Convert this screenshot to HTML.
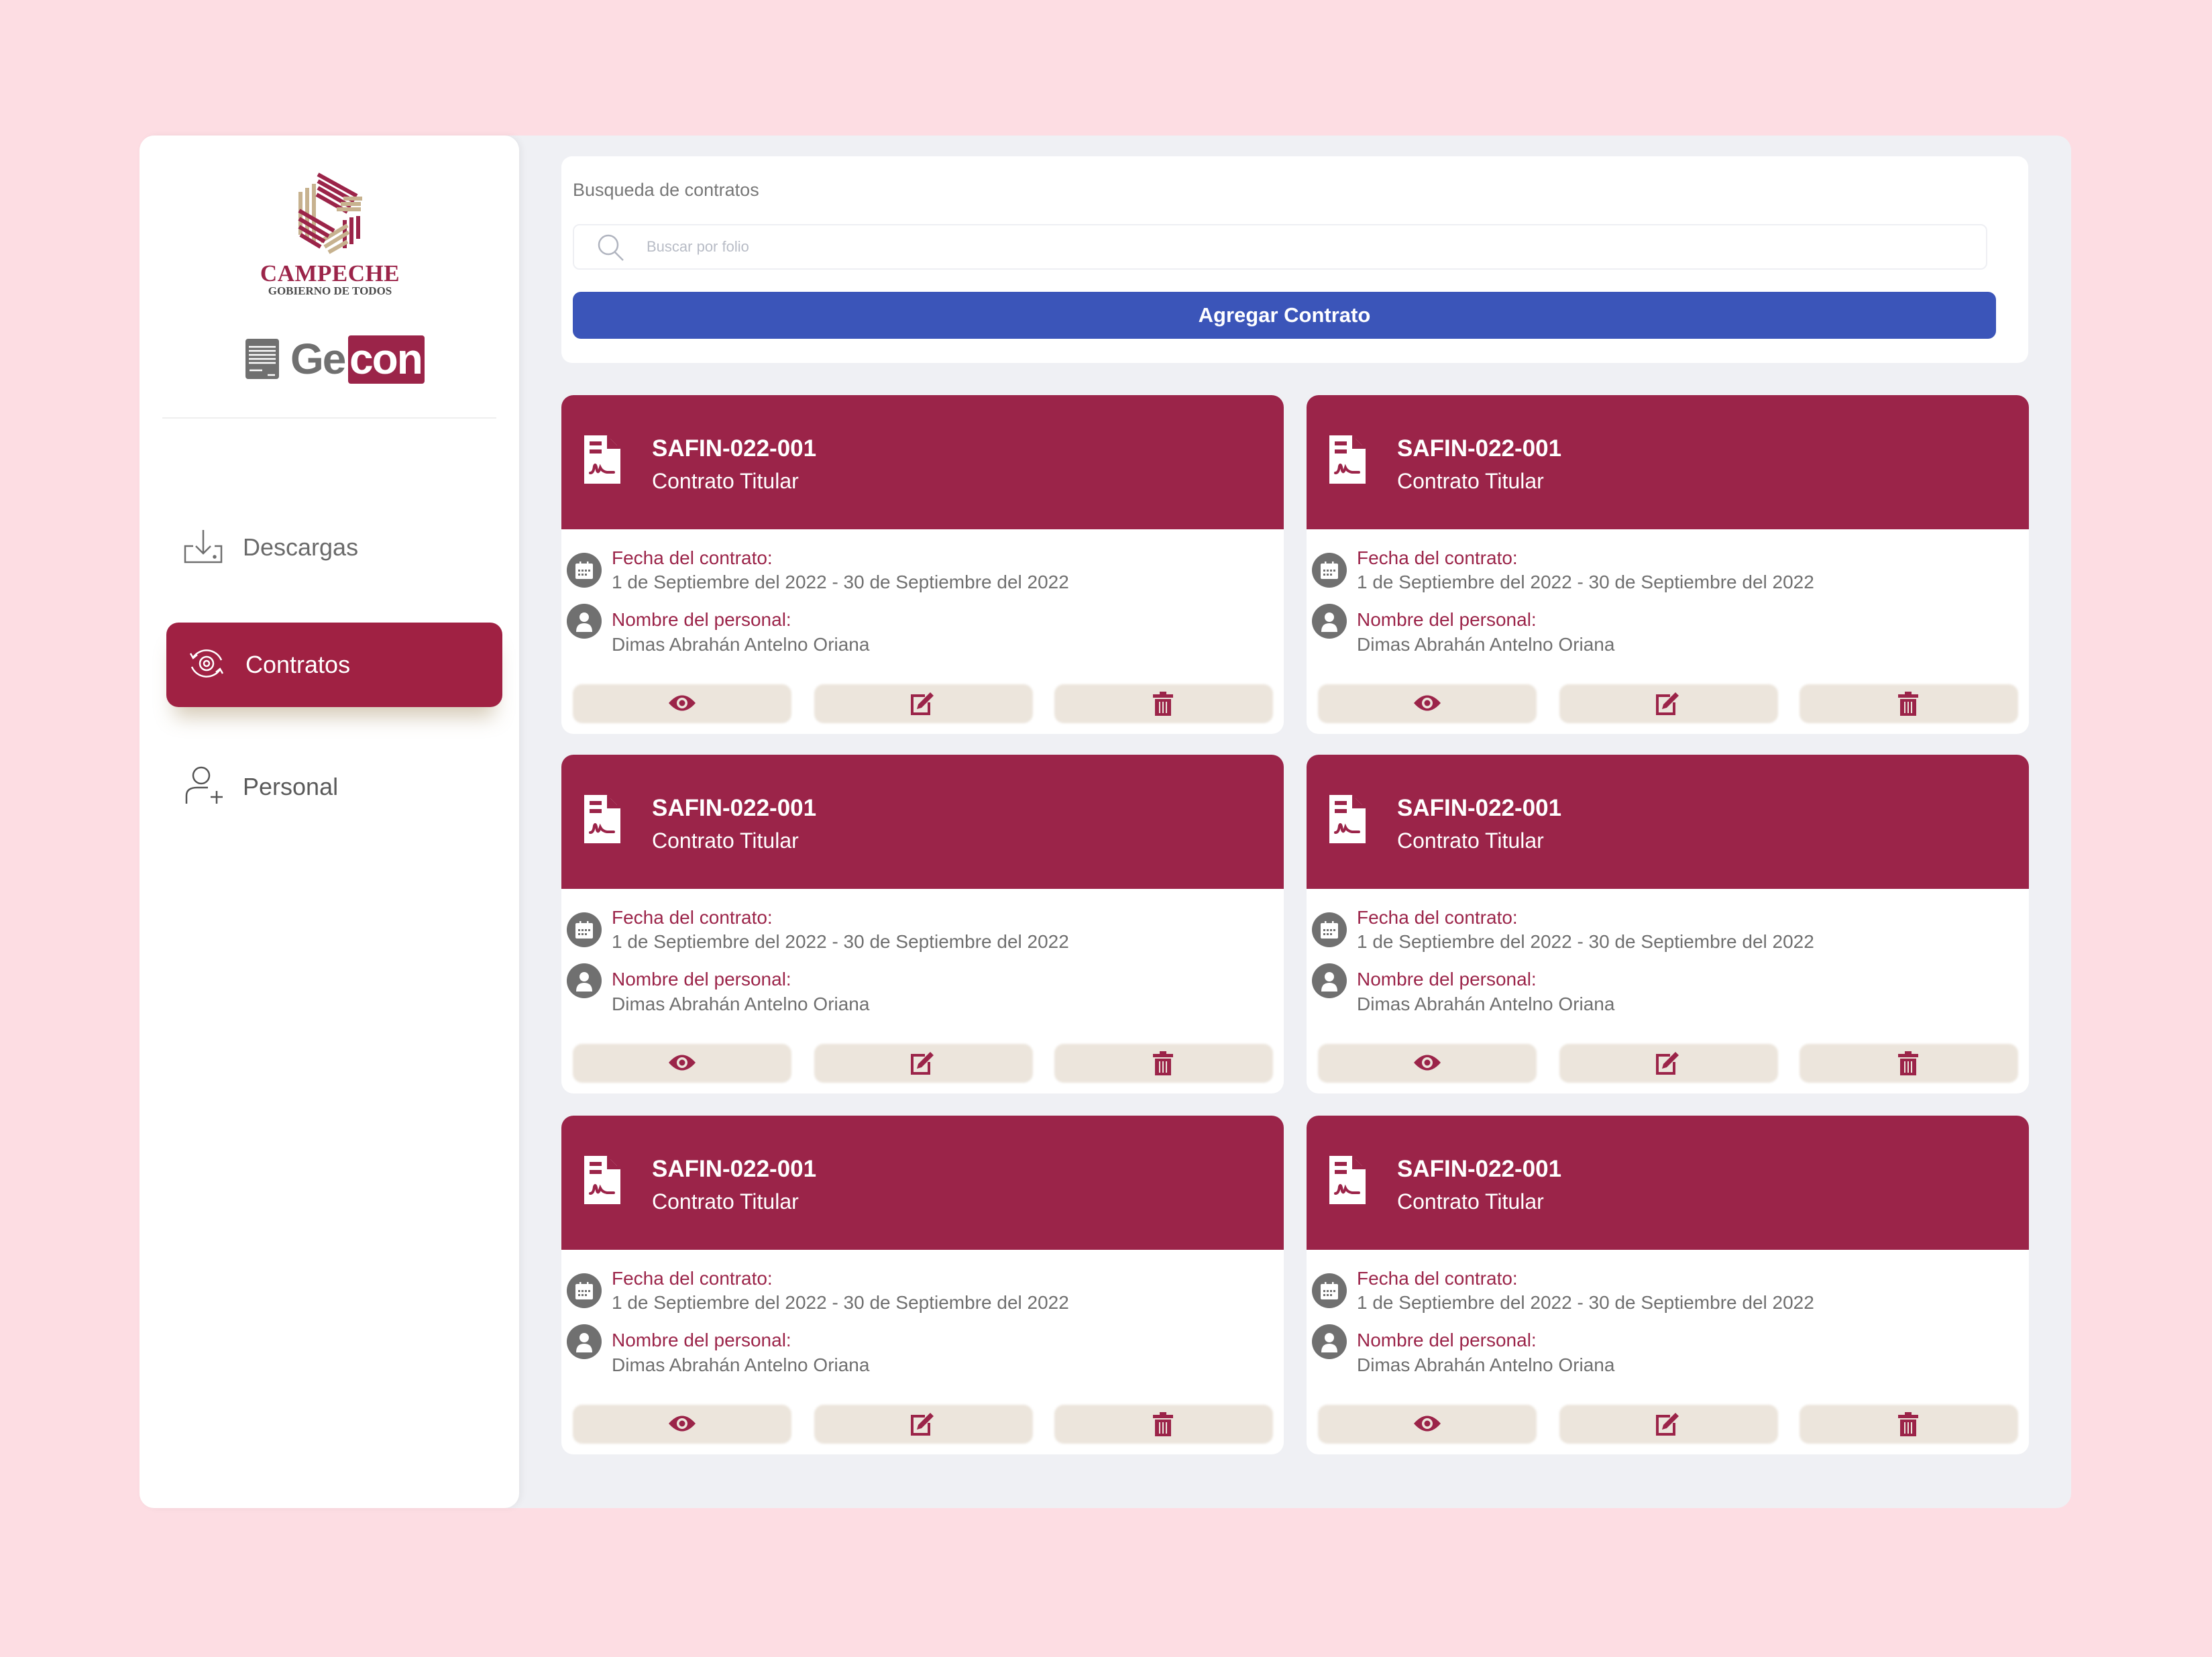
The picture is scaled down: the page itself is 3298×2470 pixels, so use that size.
<!DOCTYPE html>
<html><head><meta charset="utf-8"><style>
*{box-sizing:border-box;margin:0;padding:0}
body{width:3298px;height:2470px;background:#fddde3;font-family:"Liberation Sans",sans-serif;position:relative;overflow:hidden}
.abs{position:absolute}
.frame{left:208px;top:202px;width:2880px;height:2046px;background:#eff0f4;border-radius:22px;}
.side{left:208px;top:202px;width:566px;height:2046px;background:#fff;border-radius:22px;box-shadow:4px 0 10px rgba(0,0,0,.05)}
.card{position:absolute;width:1077px;height:505px;background:#fff;border-radius:18px;overflow:hidden}
.hd{position:absolute;left:0;top:0;width:100%;height:200px;background:#9b2449}
.t1{position:absolute;left:135px;top:60px;color:#fff;font-weight:bold;font-size:35px}
.t2{position:absolute;left:135px;top:110px;color:#fff;font-size:32px}
.circ{position:absolute;left:8px;width:52px;height:52px;border-radius:50%;background:#707070}
.lb{position:absolute;left:75px;color:#9b2449;font-size:28px}
.vl{position:absolute;left:75px;color:#6f6f6f;font-size:28px}
.btn{position:absolute;top:431px;width:326px;height:58px;background:#ece5dc;border-radius:14px;filter:blur(1.5px)}
.ic{position:absolute;top:442px}
</style></head><body>
<div class="abs frame"></div>
<div class="abs side"></div>

<svg class="abs" style="left:428px;top:250px" width="128" height="136" viewBox="0 0 128 136">
<g stroke-width="6" fill="none">
<path d="M20 36 L20 100 M30 30 L30 104 M40 24 L40 110" stroke="#c7b28f"/>
<path d="M46 20 L100 50 M46 30 L95 58 M44 40 L90 66 M46 10 L104 42" stroke="#9b2449"/>
<path d="M74 62 L110 62 M80 54 L110 54 M84 46 L112 46" stroke="#c7b28f"/>
<path d="M86 78 L86 120 M96 74 L96 114 M106 72 L106 106" stroke="#9b2449"/>
<path d="M50 110 L90 86 M56 118 L92 96 M62 126 L90 110" stroke="#c7b28f"/>
<path d="M18 64 L70 94 M18 76 L62 102 M18 88 L56 110 M20 100 L50 118" stroke="#9b2449"/>
</g></svg>
<div class="abs" style="left:372px;top:388px;width:240px;text-align:center;font-family:'Liberation Serif',serif;font-weight:bold;color:#9b2449;font-size:35px;letter-spacing:.5px">CAMPECHE</div>
<div class="abs" style="left:372px;top:424px;width:240px;text-align:center;font-family:'Liberation Serif',serif;font-weight:bold;color:#4a4a4a;font-size:17px">GOBIERNO DE TODOS</div>

<svg class="abs" style="left:366px;top:505px" width="50" height="60" viewBox="0 0 50 60"><rect width="50" height="60" rx="4" fill="#707070"/><g stroke="#fff" stroke-width="2.5"><path d="M5 12H45M5 18H45M5 24H45M5 30H45M5 36H45M6 47H25M33 54H44"/></g></svg>
<div class="abs" style="left:433px;top:498px;font-size:64px;font-weight:bold;color:#707070;letter-spacing:-2px">Ge</div>
<div class="abs" style="left:519px;top:500px;width:114px;height:72px;background:#9b2449;border-radius:4px"></div>
<div class="abs" style="left:521px;top:498px;font-size:64px;font-weight:bold;color:#fff;letter-spacing:-2px">con</div>
<div class="abs" style="left:242px;top:622px;width:498px;height:2px;background:#eeeeee"></div>

<svg class="abs" style="left:274px;top:788px" width="58" height="54" viewBox="0 0 58 54" fill="none" stroke="#6f6f6f" stroke-width="2.5"><path d="M29 2V36M18 26L29 37L40 26M14 26H2V50H56V26H46"/><circle cx="46" cy="42" r="1.5" fill="#6f6f6f"/></svg>
<div class="abs" style="left:362px;top:795px;font-size:36px;color:#6a6a6a">Descargas</div>

<div class="abs" style="left:248px;top:928px;width:501px;height:126px;background:#a02143;border-radius:18px;box-shadow:0 26px 30px -12px rgba(160,135,90,.45)"></div>
<svg class="abs" style="left:280px;top:962px" width="56" height="54" viewBox="0 0 56 54" fill="none" stroke="#fff" stroke-width="2.5"><path d="M8 18A24 24 0 0 1 50 22M48 36A24 24 0 0 1 6 32M4 12L8 19L14 14M52 42L48 35L42 40"/><circle cx="28" cy="27" r="10"/><circle cx="28" cy="27" r="4"/></svg>
<div class="abs" style="left:366px;top:970px;font-size:36px;color:#fff">Contratos</div>

<svg class="abs" style="left:274px;top:1142px" width="60" height="58" viewBox="0 0 60 58" fill="none" stroke="#555" stroke-width="2.5"><circle cx="26" cy="14" r="12"/><path d="M4 56V44Q4 32 20 32H36M40 46H58M49 37V56"/></svg>
<div class="abs" style="left:362px;top:1152px;font-size:36px;color:#5a5a5a">Personal</div>

<div class="abs" style="left:837px;top:233px;width:2187px;height:308px;background:#fff;border-radius:16px"></div>
<div class="abs" style="left:854px;top:268px;font-size:27px;color:#777">Busqueda de contratos</div>
<div class="abs" style="left:854px;top:334px;width:2109px;height:68px;border:2px solid #eeeff3;border-radius:10px"></div>
<svg class="abs" style="left:890px;top:348px" width="44" height="42" viewBox="0 0 44 42" fill="none" stroke="#b0b4bf" stroke-width="2.5"><circle cx="17" cy="17" r="14"/><path d="M27 28L39 40"/></svg>
<div class="abs" style="left:964px;top:355px;font-size:22px;color:#b8bcc6">Buscar por folio</div>
<div class="abs" style="left:854px;top:435px;width:2122px;height:70px;background:#3b55b9;border-radius:12px;color:#fff;font-size:31px;font-weight:bold;text-align:center;line-height:70px">Agregar Contrato</div>

<div id="cards"></div>
<script>
var xs=[837,1948],ys=[589,1125,1663],h='';
var doc='<svg class="abs" style="left:34px;top:60px" width="54" height="72" viewBox="0 0 54 72"><path d="M0 0H34L54 20V72H0Z" fill="#fff"/><path d="M34 0V20H54" fill="#9b2449"/><path d="M37 0V17H54" fill="none" stroke="#9b2449" stroke-width="4"/><rect x="8" y="9" width="18" height="6" fill="#9b2449"/><rect x="8" y="21" width="18" height="6" fill="#9b2449"/><path d="M9 56Q14 56 15 46Q17 40 19 52Q21 58 24 48Q27 54 34 55H44" fill="none" stroke="#9b2449" stroke-width="4" stroke-linecap="round"/></svg>';
var cal='<svg class="abs" style="left:12px;top:12px" width="28" height="28" viewBox="0 0 28 28"><rect x="7" y="1" width="2.5" height="5" fill="#fff"/><rect x="18" y="1" width="2.5" height="5" fill="#fff"/><rect x="1" y="4" width="26" height="23" rx="2" fill="#fff"/><g fill="#707070"><rect x="5" y="13" width="3" height="3"/><rect x="10" y="13" width="3" height="3"/><rect x="15" y="13" width="3" height="3"/><rect x="20" y="13" width="3" height="3"/><rect x="5" y="19" width="3" height="3"/><rect x="10" y="19" width="3" height="3"/><rect x="15" y="19" width="3" height="3"/></g></svg>';
var usr='<svg class="abs" style="left:14px;top:12px" width="24" height="30" viewBox="0 0 24 30"><circle cx="12" cy="8" r="7" fill="#fff"/><path d="M0 30Q0 17 12 17Q24 17 24 30Z" fill="#fff"/></svg>';
var eye='<svg class="ic" style="left:160px" width="40" height="34" viewBox="0 0 40 34"><path d="M0 17Q20 -6 40 17Q20 40 0 17Z" fill="#9b2449"/><circle cx="20" cy="17" r="8" fill="#ece5dc"/><circle cx="20" cy="17" r="4.5" fill="#9b2449"/></svg>';
var ed='<svg class="ic" style="left:520px" width="36" height="36" viewBox="0 0 36 36"><path d="M22 6H3V33H28V16" fill="none" stroke="#9b2449" stroke-width="4"/><path d="M30 1L35 6L17 24L10 26L12 19Z" fill="#9b2449"/></svg>';
var tr='<svg class="ic" style="left:882px" width="30" height="36" viewBox="0 0 30 36"><rect x="10" y="0" width="10" height="4" fill="#9b2449"/><rect x="0" y="4" width="30" height="5" fill="#9b2449"/><path d="M3 11H27V36H3Z" fill="#9b2449"/><path d="M10 15V32M15 15V32M20 15V32" stroke="#ece5dc" stroke-width="2"/></svg>';
for(var r=0;r<3;r++)for(var c=0;c<2;c++){
h+='<div class="card" style="left:'+xs[c]+'px;top:'+ys[r]+'px"><div class="hd">'+doc+'<div class="t1">SAFIN-022-001</div><div class="t2">Contrato Titular</div></div>'+
'<div class="circ" style="top:235px">'+cal+'</div><div class="lb" style="top:227px">Fecha del contrato:</div><div class="vl" style="top:263px">1 de Septiembre del 2022 - 30 de Septiembre del 2022</div>'+
'<div class="circ" style="top:311px">'+usr+'</div><div class="lb" style="top:319px">Nombre del personal:</div><div class="vl" style="top:356px">Dimas Abrahán Antelno Oriana</div>'+
'<div class="btn" style="left:17px"></div><div class="btn" style="left:377px"></div><div class="btn" style="left:735px"></div>'+eye+ed+tr+'</div>';}
document.getElementById('cards').innerHTML=h;
</script>
</body></html>
